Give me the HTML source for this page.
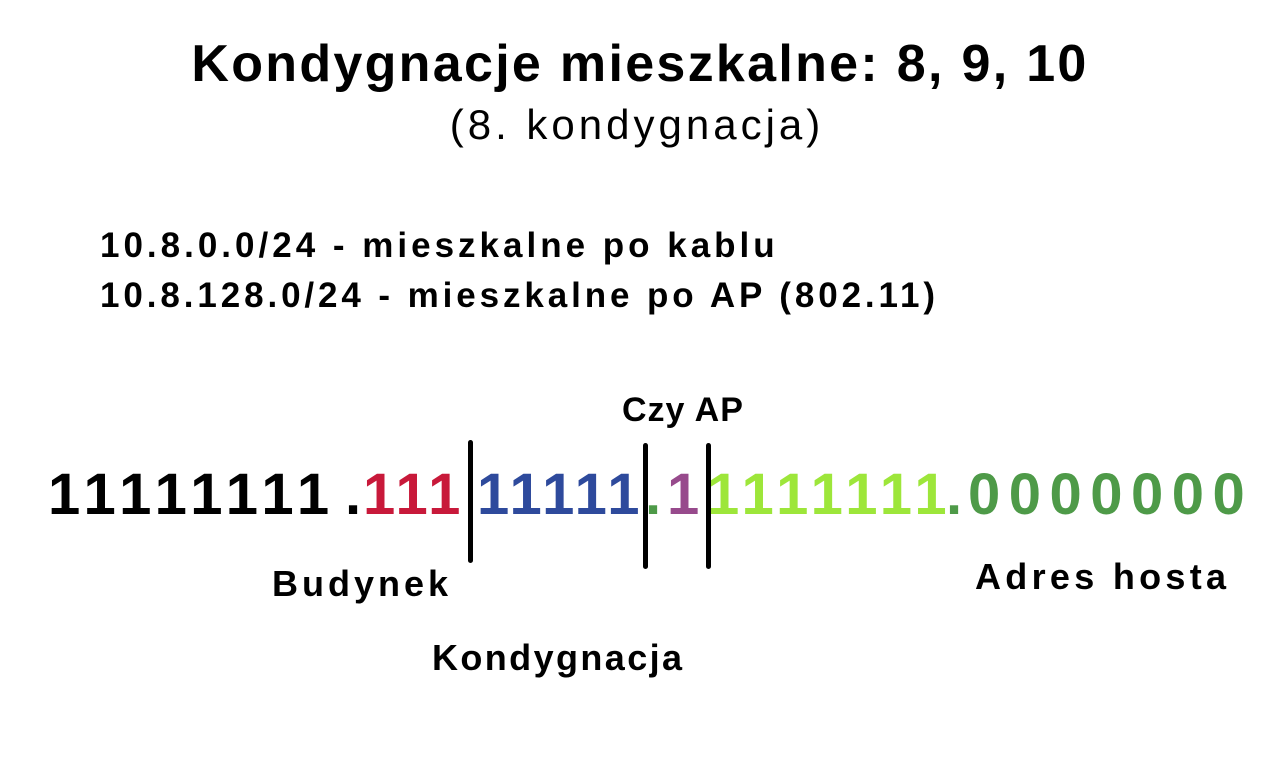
<!DOCTYPE html>
<html><head><meta charset="utf-8"><style>
html,body{margin:0;padding:0;background:#fff;}
body{width:1280px;height:771px;position:relative;overflow:hidden;font-family:"Liberation Sans",sans-serif;color:#000;}
.a{position:absolute;white-space:nowrap;}
.b{font-weight:bold;}
.d{font-weight:bold;font-size:58px;top:466px;line-height:58px;letter-spacing:3.5px;}
.v{position:absolute;width:5px;background:#000;border-radius:3px;}
</style></head><body>
<div class="a b" style="left:0;width:1280px;text-align:center;top:34px;font-size:52px;line-height:60px;letter-spacing:2.3px;">Kondygnacje mieszkalne: 8, 9, 10</div>
<div class="a" style="left:0;width:1274px;text-align:center;top:100px;font-size:42px;line-height:50px;letter-spacing:4px;">(8. kondygnacja)</div>
<div class="a b" style="left:100px;top:226px;font-size:35px;line-height:40px;letter-spacing:4px;">10.8.0.0/24 - mieszkalne po kablu</div>
<div class="a b" style="left:100px;top:276px;font-size:35px;line-height:40px;letter-spacing:3.9px;">10.8.128.0/24 - mieszkalne po AP (802.11)</div>
<div class="a b" style="left:622px;top:390px;font-size:34px;line-height:40px;letter-spacing:1px;">Czy AP</div>
<div class="a d" style="left:48px;letter-spacing:6.5px;">11111111</div>
<div class="a d" style="left:345px;">.</div>
<div class="a d" style="left:363px;color:#c8193a;">111</div>
<div class="a d" style="left:477px;color:#2e4a9c;">11111</div>
<div class="a d" style="left:645px;color:#4e9a48;">.</div>
<div class="a d" style="left:667px;color:#974a8c;">1</div>
<div class="a d" style="left:707px;color:#9de63a;letter-spacing:5.5px;">1111111</div>
<div class="a d" style="left:946px;color:#4e9a48;">.</div>
<div class="a d" style="left:968px;color:#4e9a48;letter-spacing:8.5px;">0000000</div>
<div class="v" style="left:468px;top:440px;height:123px;"></div>
<div class="v" style="left:643px;top:443px;height:126px;"></div>
<div class="v" style="left:706px;top:443px;height:126px;"></div>
<div class="a b" style="left:272px;top:562px;font-size:36px;line-height:44px;letter-spacing:4px;">Budynek</div>
<div class="a b" style="left:975px;top:555px;font-size:36px;line-height:44px;letter-spacing:4.3px;">Adres hosta</div>
<div class="a b" style="left:432px;top:636px;font-size:36px;line-height:44px;letter-spacing:2.4px;">Kondygnacja</div>
</body></html>
